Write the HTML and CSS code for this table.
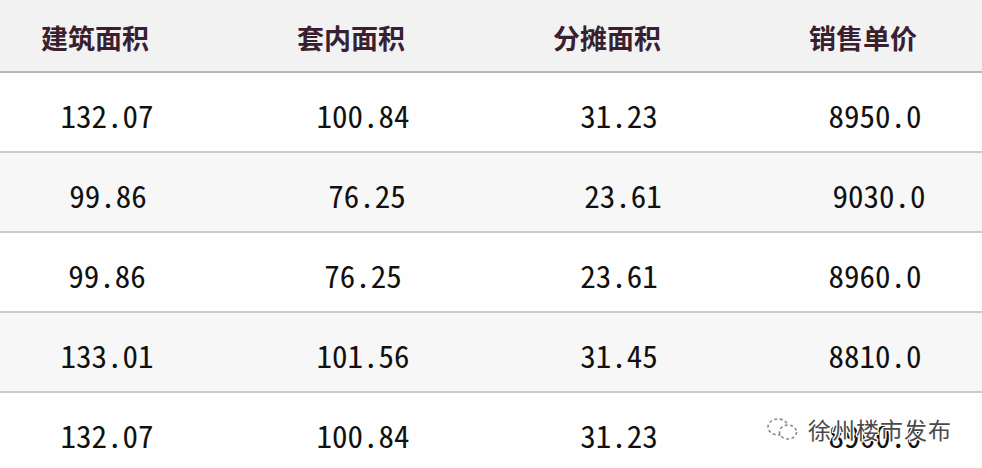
FILE: index.html
```html
<!DOCTYPE html>
<html lang="zh">
<head>
<meta charset="utf-8">
<link rel="stylesheet" href="styles.css">
</head>
<body>
<div class="sheet">
  <div class="table">
    <div class="row head">
      <div class="cell">建筑面积</div>
      <div class="cell">套内面积</div>
      <div class="cell">分摊面积</div>
      <div class="cell">销售单价</div>
    </div>
    <div class="row">
      <div class="cell">132.07</div>
      <div class="cell">100.84</div>
      <div class="cell">31.23</div>
      <div class="cell">8950.0</div>
    </div>
    <div class="row alt shifted">
      <div class="cell">99.86</div>
      <div class="cell">76.25</div>
      <div class="cell">23.61</div>
      <div class="cell">9030.0</div>
    </div>
    <div class="row">
      <div class="cell">99.86</div>
      <div class="cell">76.25</div>
      <div class="cell">23.61</div>
      <div class="cell">8960.0</div>
    </div>
    <div class="row alt">
      <div class="cell">133.01</div>
      <div class="cell">101.56</div>
      <div class="cell">31.45</div>
      <div class="cell">8810.0</div>
    </div>
    <div class="row last">
      <div class="cell">132.07</div>
      <div class="cell">100.84</div>
      <div class="cell">31.23</div>
      <div class="cell">8960.0</div>
    </div>
  </div>
  <div class="watermark">
    <svg class="wm-icon" width="34" height="24" viewBox="0 0 34 24">
      <ellipse cx="12" cy="10" rx="10" ry="8" fill="none" stroke="#8a8a8a" stroke-width="1.6" stroke-dasharray="3 2.5"/>
      <ellipse cx="22" cy="15" rx="8.5" ry="7" fill="#fff" stroke="#8a8a8a" stroke-width="1.6" stroke-dasharray="3 2.5"/>
    </svg>
    <span class="wm-text">徐州楼市发布</span>
  </div>
</div>
</body>
</html>
```

FILE: styles.css
```css
html, body {
  margin: 0;
  padding: 0;
  background: #ffffff;
}
body {
  width: 982px;
  height: 468px;
  overflow: hidden;
}
.sheet {
  position: relative;
  width: 982px;
  height: 468px;
  overflow: hidden;
}
.table {
  margin-left: -33px;
  width: 1024px;
}
.row {
  display: grid;
  grid-template-columns: repeat(4, 256px);
  align-items: center;
  height: 78px;
  border-bottom: 2px solid #cacaca;
  background: #fefefe;
}
.row.alt {
  background: #f7f7f7;
}
.row.last {
  border-bottom: none;
}
.row.head {
  height: 71px;
  background: #f2f2f2;
  border-bottom: 2px solid #b9b9b9;
}
.cell {
  text-align: center;
  padding-left: 24px;
  padding-top: 4px;
  font-family: "Noto Sans Mono CJK SC", "DejaVu Sans Mono", monospace;
  font-size: 31px;
  color: #111111;
  line-height: 1;
}
.row.shifted .cell {
  padding-left: 32px;
}
.row.shifted .cell:first-child {
  padding-left: 26px;
}
.head .cell {
  padding-left: 0;
  padding-top: 4px;
  font-family: "Noto Sans CJK SC", sans-serif;
  font-weight: 700;
  font-size: 27px;
  color: #38202e;
}
.watermark {
  position: absolute;
  left: 766px;
  top: 412px;
  display: flex;
  align-items: center;
  gap: 8px;
}
.wm-text {
  font-family: "Noto Sans CJK SC", sans-serif;
  font-size: 23px;
  color: #4a4a4a;
  letter-spacing: 1px;
  text-shadow: 1px 0 0 #fff, -1px 0 0 #fff, 0 1px 0 #fff, 0 -1px 0 #fff, 1px 1px 0 #fff, -1px -1px 0 #fff, 1px -1px 0 #fff, -1px 1px 0 #fff;
}
```
